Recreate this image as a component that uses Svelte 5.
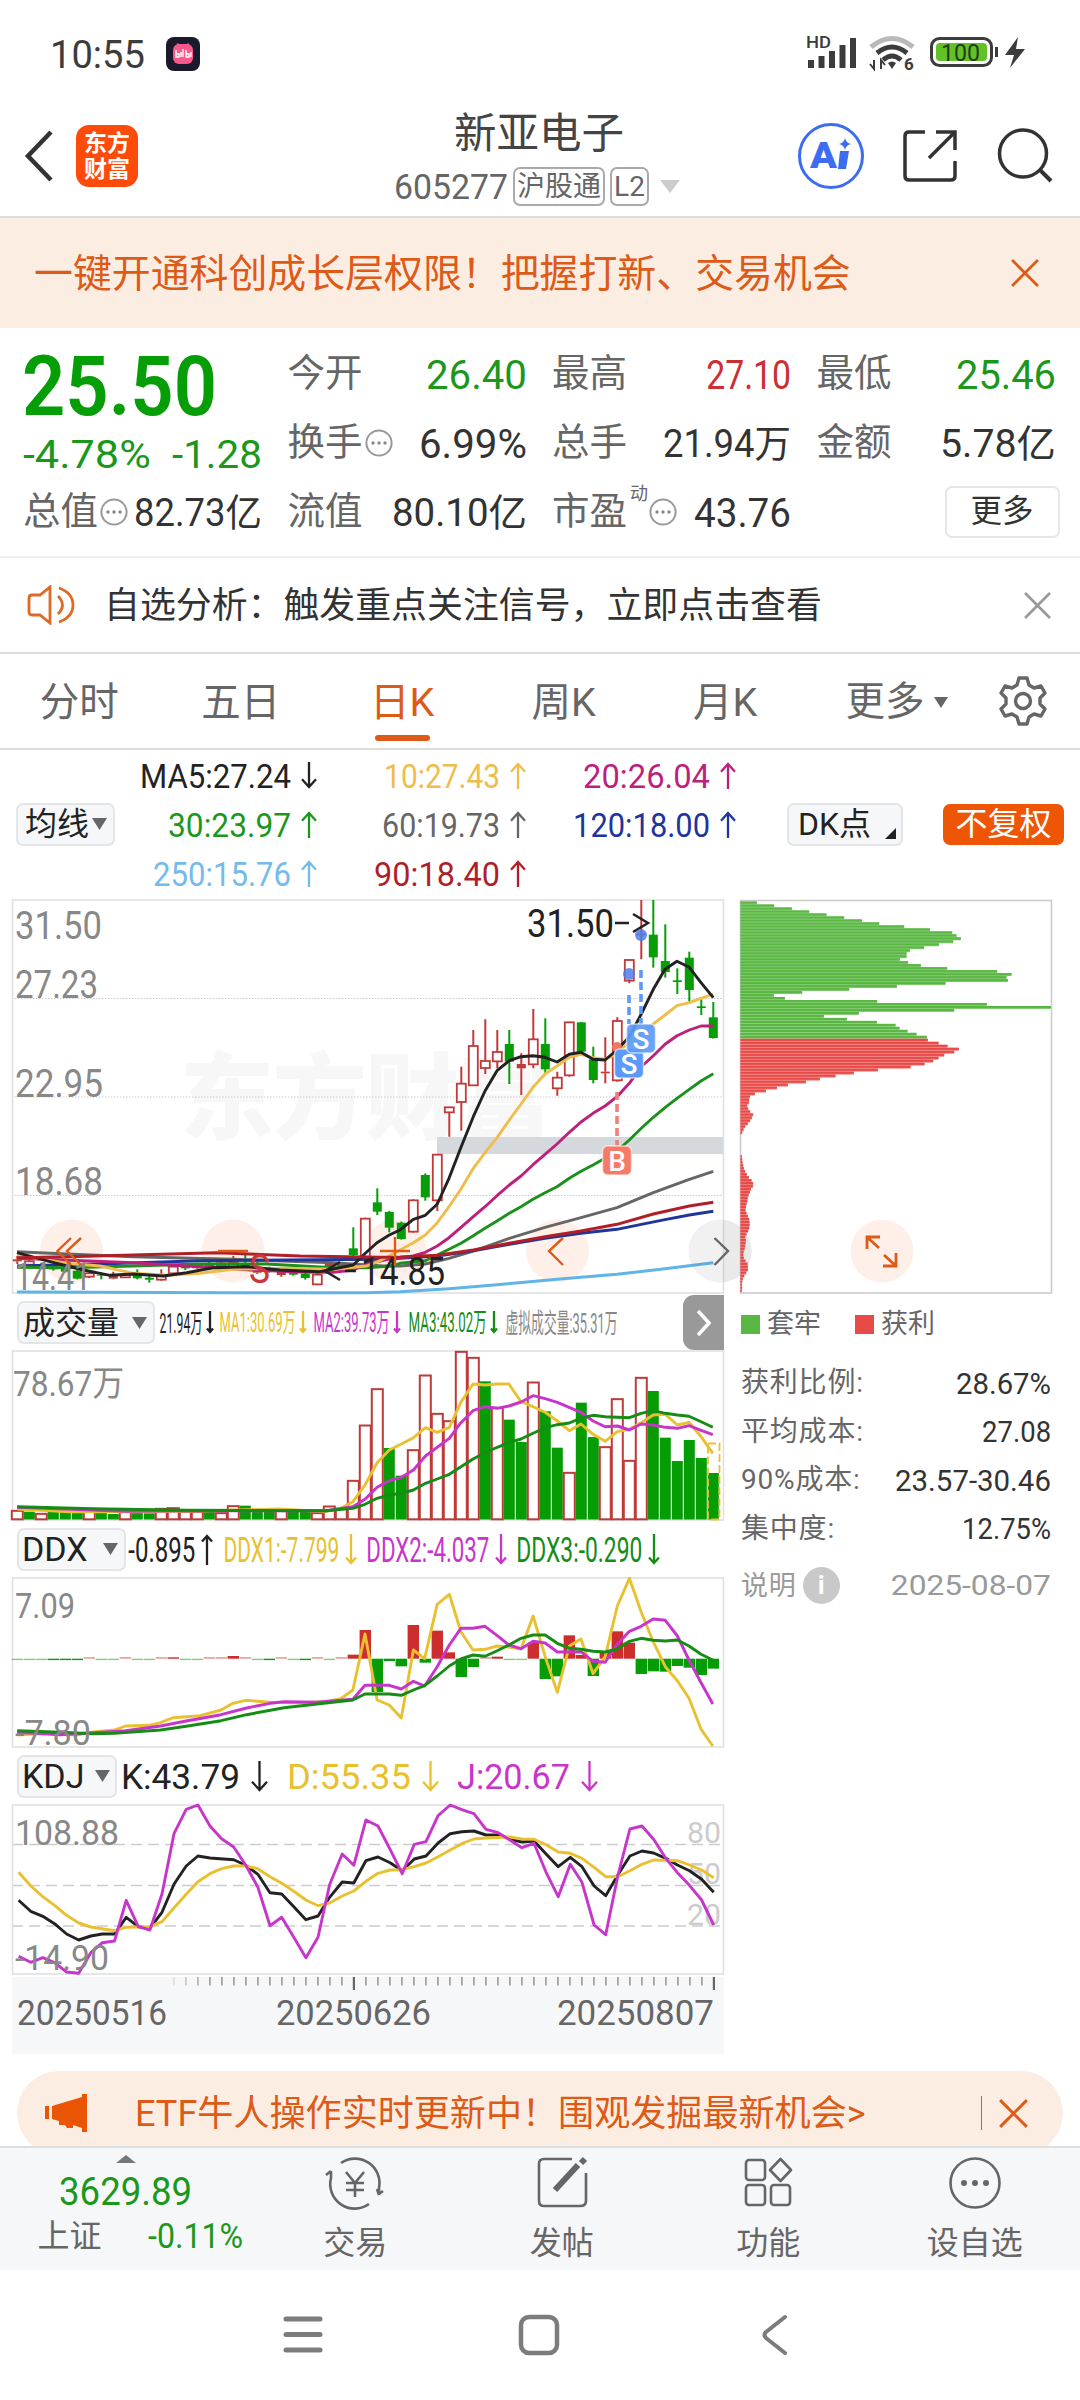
<script>
  // Horizontal position of trading day i on every chart
  const X0 = 17.3, STEP = 12;
  const dx = (i) => X0 + STEP * i;
  const pairs = (s) => s.trim().split(/\s+/).map((p) => p.split(',').map(Number));
  // Points are stored on a fine grid: kx/ky scale them, ox/oy shift them
  const line = (s, kx, ox, oy) =>
    pairs(s).map(([x, y]) => `${(x * kx + ox).toFixed(1)},${(y / 3 + oy).toFixed(1)}`).join(' ');
  const k = 730 / 1568;
  const price = (head, tail) => line(head, 1 / 3, 0, 890) + ' ' + line(tail, 1 / 3, 380, 890);

  // Squeezes a line of text horizontally to the given width
  const fit = (node, w) => {
    const natural = node.getComputedTextLength();
    if (natural) node.setAttribute('transform', `scale(${(w / natural).toFixed(4)} 1)`);
  };

  // [day, kind, high, bodyTop, bodyBottom, low]; r hollow up, f filled up, g down
  const candles = [
    [0,'f',1098,1108,1114,1122],[1,'r',1105,1114,1124,1127],[2,'g',1118,1122,1134,1138],[3,'g',1122,1127,1138,1142],[4,'g',1125,1131,1145,1148],
    [5,'g',1138,1142,1166,1168],[6,'r',1146,1150,1160,1164],[7,'g',1148,1154,1157,1168],[8,'f',1145,1154,1166,1168],[9,'r',1142,1154,1162,1164],
    [10,'g',1138,1152,1165,1168],[11,'g',1155,1163,1169,1178],[12,'r',1138,1158,1169,1172],[13,'r',1124,1130,1150,1154],[14,'g',1124,1129,1135,1140],
    [15,'r',1118,1124,1132,1136],[16,'g',1115,1122,1130,1133],[17,'r',1112,1120,1128,1132],[18,'r',1098,1118,1130,1133],[19,'g',1095,1120,1130,1134],
    [20,'f',1115,1130,1148,1152],[21,'g',1130,1136,1144,1148],[22,'f',1138,1143,1155,1160],[23,'g',1143,1149,1154,1157],[24,'g',1148,1151,1164,1169],
    [25,'r',1150,1154,1183,1186],[26,'f',1115,1118,1146,1148],[27,'f',1118,1122,1130,1132],[28,'g',1012,1075,1095,1100],[29,'r',983,986,1100,1102],
    [30,'g',895,937,965,975],[31,'g',963,966,1013,1027],[32,'g',995,998,1047,1049],[33,'r',928,931,1025,1028],[34,'g',850,855,922,932],
    [35,'r',792,794,931,963],[36,'r',650,652,667,740],[37,'r',530,581,636,722],[38,'r',420,468,586,588],[39,'r',388,513,534,552],
    [40,'r',420,486,514,535],[41,'g',420,462,515,582],[42,'f',490,522,535,615],[43,'r',357,448,523,535],[44,'g',385,462,538,550],
    [45,'r',545,563,595,617],[46,'r',395,397,556,560],[47,'g',396,397,485,486],[48,'g',470,508,570,580],[49,'f',442,545,550,580],
    [50,'r',382,393,571,575],[51,'r',208,210,272,280],[52,'f',30,131,136,208],[53,'g',30,134,202,233],[54,'g',103,213,246,263],
    [55,'g',235,271,276,312],[56,'g',185,203,300,340],[57,'g',328,349,354,375],[58,'g',336,382,444,446]
  ].map(([i, t, h, a, b, l]) => ({ x: dx(i), t, h: h / 3 + 890, a: a / 3 + 890, b: b / 3 + 890, l: l / 3 + 890 }));

  const averages = [
    ['#5fb4e8', price('51,1206 700,1208 1100,1208', '60,1205 207,1196 351,1184 531,1168 711,1153 855,1136 1000,1118')],
    ['#666', price('51,1085 200,1092 400,1100 700,1108 1000,1118 1150,1128', '60,1128 136,1122 207,1105 280,1083 388,1045 495,1012 603,983 711,953 820,908 928,868 1000,844')],
    ['#20349e', price('51,1128 300,1122 600,1112 1140,1108', '60,1105 172,1098 280,1082 388,1063 495,1045 603,1030 711,1018 784,1003 855,989 928,975 1000,964')],
    ['#1b901b', price('51,1132 200,1133 400,1128 600,1122 800,1122 1000,1133 1100,1133 1180,1127', '60,1120 136,1112 172,1095 207,1078 243,1060 280,1037 315,1015 351,993 388,970 423,950 459,928 495,908 531,890 568,865 603,844 639,825 675,805 711,783 748,750 784,715 820,682 855,653 891,625 928,598 963,573 1000,551')],
    ['#bd1f7d', price('51,1105 400,1118 600,1130 750,1140 900,1146 1000,1147 1060,1140 1100,1122 1180,1104', '60,1103 100,1098 136,1087 172,1068 207,1043 243,1012 280,980 315,950 351,917 388,885 423,858 459,824 495,793 531,762 568,727 603,696 639,670 675,648 711,620 748,580 784,530 820,497 855,463 891,437 928,420 963,408 1000,408')],
    ['#f0bd4c', price('51,1095 200,1120 300,1128 400,1150 500,1156 600,1150 700,1138 850,1135 1000,1138 1100,1128', '0,1112 60,1080 100,1058 136,1035 172,998 207,950 243,897 280,835 315,788 351,743 388,690 423,642 459,592 495,552 531,528 568,502 603,493 639,503 675,508 711,492 748,455 784,430 820,402 855,375 891,347 928,338 963,325 1000,312')],
    ['#222', price('51,1088 150,1115 250,1140 330,1156 400,1152 490,1158 560,1148 640,1133 740,1130 840,1140 960,1145 1060,1125 1096,1090 1131,1058 1168,1035', '60,1020 100,988 136,976 172,942 207,865 243,772 280,680 315,603 351,542 388,512 423,500 459,497 495,502 531,516 568,493 603,487 639,508 675,510 711,480 748,440 784,372 820,298 855,238 891,214 928,232 963,278 1000,323')],
    ['#b01f28', price('51,1103 200,1100 400,1095 650,1088 900,1098 1140,1102', '60,1101 172,1096 280,1080 388,1060 495,1040 603,1023 711,1003 820,972 928,948 1000,937')]
  ];

  const volumes = 'r661 g665 r670 g666 g666 g666 r664 g666 g672 r664 g666 g670 r655 r653 r664 r664 g663 r668 r647 g647 g660 g660 r661 g664 g664 r668 r648 r655 r571 r405 r296 g474 g557 r479 r255 r370 r392 r184 r202 g274 r352 g389 g456 r276 g364 g473 r547 g338 g441 r470 r326 r511 r262 g303 g443 g513 g450 g504 g549'
    .split(' ').map((v, i) => ({ x: dx(i), up: v[0] === 'r', y: +v.slice(1) / 3 + 1290 }));
  const volLines = [
    ['#e9c130', line('37,657 150,665 300,665 450,662 600,657 700,665 732,655 758,635 784,585 810,518 836,480 862,462 888,443 914,413 939,427 965,412 990,337 1016,282 1042,285 1068,282 1093,282 1119,335 1145,350 1171,367 1197,393 1223,422 1248,402 1274,433 1300,454 1326,425 1352,418 1377,398 1403,375 1429,373 1455,405 1480,397 1506,440 1531,490', k, 0, 1290)],
    ['#c735cb', line('37,652 270,664 400,662 700,662 758,650 784,628 810,592 836,572 862,562 888,540 914,498 965,445 990,398 1016,362 1042,350 1068,355 1093,348 1119,336 1145,317 1171,326 1197,337 1248,367 1274,393 1300,410 1326,408 1352,420 1377,402 1403,405 1429,412 1455,415 1480,407 1506,421 1531,434', k, 0, 1290)],
    ['#158c15', line('37,650 200,656 400,661 700,662 758,655 784,643 810,625 836,615 862,610 888,600 914,580 939,567 965,553 1016,507 1042,488 1068,472 1093,458 1119,447 1145,430 1171,413 1197,404 1223,399 1248,384 1274,376 1300,380 1352,383 1377,370 1403,362 1429,370 1455,375 1480,379 1506,395 1531,412', k, 0, 1290)]
  ];

  const ddx = 'g0 g0 g0 g299 g299 g299 r0 g0 g0 r0 g0 g0 r0 r292 g0 g0 r0 r0 r288 r0 g0 g299 r0 g0 g299 r0 g0 r0 r284 r210 g396 g303 g319 r195 g308 r212 r277 g351 g321 r0 r290 g0 g0 r248 g357 g349 r226 r285 g348 r275 r214 r248 g342 g334 g335 g318 g323 g345 g326'
    .split(' ').map((v, i) => {
      const up = v[0] === 'r', e = +v.slice(1), thin = e === 0;
      const y0 = 1658.7, y1 = thin ? (up ? y0 - 1.5 : y0 + 1.2) : e / 3 + 1560;
      return { x: dx(i), up, thin, y: Math.min(y0, y1), h: Math.max(1.4, Math.abs(y1 - y0)) };
    });
  const ddxLines = [
    ['#e9c130', line('37,525 100,520 165,525 200,516 245,510 270,498 320,496 345,488 372,473 430,467 475,450 500,430 528,421 580,427 640,428 700,425 732,416 758,390 784,222 810,420 836,435 862,474 888,270 912,296 939,133 965,103 990,215 1016,270 1042,268 1068,258 1093,261 1119,267 1145,168 1171,290 1197,397 1223,258 1248,237 1274,341 1300,290 1326,138 1352,55 1377,155 1403,245 1429,320 1455,362 1480,415 1506,508 1531,558', k, 0, 1560)],
    ['#c735cb', line('37,517 130,524 200,518 270,512 345,498 400,483 475,464 530,444 580,430 610,425 680,427 758,418 784,376 836,376 862,387 888,364 912,378 939,320 965,255 990,205 1016,205 1042,199 1068,227 1093,255 1119,266 1145,244 1171,249 1197,276 1248,275 1274,304 1300,307 1326,253 1352,214 1377,199 1403,177 1429,181 1455,228 1480,300 1506,368 1531,432', k, 0, 1560)],
    ['#158c15', line('37,512 130,517 200,521 245,520 345,510 400,499 475,482 530,464 610,443 700,429 758,420 784,402 836,402 862,406 888,390 912,377 939,348 965,318 990,297 1016,285 1042,289 1068,272 1093,255 1119,235 1145,225 1171,225 1197,250 1223,265 1248,268 1274,274 1300,276 1326,267 1352,244 1377,235 1403,241 1429,243 1455,240 1480,258 1506,283 1531,300', k, 0, 1560)]
  ];

  const kdjLines = [
    ['#222', line('40,451 66,484 92,499 117,521 143,552 169,570 195,558 220,552 246,552 271,502 297,530 322,534 348,487 374,402 400,348 425,318 451,324 502,329 528,346 554,373 580,428 605,432 631,470 657,509 683,498 708,442 735,396 760,399 786,332 812,321 838,338 864,362 890,327 915,318 941,279 967,251 992,245 1018,243 1044,255 1075,255 1095,267 1121,276 1147,273 1173,312 1199,350 1225,322 1250,350 1276,408 1301,437 1327,375 1353,318 1379,303 1404,309 1430,325 1455,345 1481,362 1507,388 1533,427', k, 0, 1750)],
    ['#e9c130', line('40,367 66,407 92,440 117,466 143,496 169,519 195,531 246,542 271,532 322,530 348,515 374,473 400,433 425,395 451,371 476,356 502,348 528,348 554,356 580,380 605,400 631,424 657,450 683,467 708,459 735,438 760,423 786,394 812,370 838,360 864,359 890,350 915,339 941,320 967,300 992,281 1018,267 1044,264 1095,261 1121,267 1147,268 1173,284 1199,306 1225,310 1250,325 1276,352 1301,380 1327,380 1353,362 1379,343 1404,330 1455,332 1481,345 1507,360 1533,383', k, 0, 1750)],
    ['#c735cb', line('40,619 66,637 92,623 117,638 143,666 169,670 195,608 220,578 246,573 271,451 297,530 322,540 348,432 374,250 400,178 425,165 451,228 476,266 502,291 528,346 554,412 580,527 605,502 631,562 657,623 683,562 708,404 735,312 760,346 786,210 812,228 838,298 864,371 890,283 915,275 941,197 967,165 992,179 1018,191 1044,238 1070,248 1095,270 1121,293 1147,280 1173,367 1199,440 1225,343 1250,397 1276,525 1301,554 1327,378 1353,237 1379,228 1404,268 1430,325 1455,368 1481,406 1507,450 1533,525', k, 0, 1750)]
  ];
  const ticks = Array.from({ length: 46 }, (_, n) => n + 13);

  // Cost distribution, one width per price level, top to bottom
  const chips = [111,163,216,268,320,373,426,478,553,630,697,710,723,700,657,613,570,560,560,540,565,603,682,832,875,860,864,677,531,388,247,162,195,472,801,993,703,417,312,381,471,527,539,563,590,621,
    624,656,683,717,703,673,656,640,614,572,474,402,347,300,258,204,171,138,105,90,88,87,82,85,91,100,96,91,84,76,71,67,62,62,62,62,62,62,62,66,67,68,70,72,76,81,87,95,100,99,93,90,86,83,82,80,78,77,80,84,88,89,89,88,85,80,76,78,77,76,74,71,70,72,77,83,84,84,79,73,69,67,66,67,66]
    .map((v, i) => ({ y: 901.5 + i * 2.985, w: (v - 62) / 3, up: i >= 46 }));

  const tabs = ['分时', '五日', '日K', '周K', '月K'];
  const mas = [
    ['MA5:27.24', 150, '#222', 0], ['10:27.43', 115, '#f0bd4c', 1], ['20:26.04', 126, '#bd1f7d', 1],
    ['30:23.97', 122, '#1b981b', 1], ['60:19.73', 117, '#666', 1], ['120:18.00', 136, '#20349e', 1],
    ['250:15.76', 137, '#74bbec', 1], ['90:18.40', 125, '#b01f28', 1]
  ];
  const volLegend = [['21.94万', 42, '#222', 5], ['MA1:30.69万', 75, '#e9c130', 6], ['MA2:39.73万', 75, '#c735cb', 7], ['MA3:43.02万', 77, '#158c15', 8]];
  const ddxLegend = [['-0.895', 66, '#222', 1, 3], ['DDX1:-7.799', 115, '#e9c130', 0, 11], ['DDX2:-4.037', 122, '#c735cb', 0, 10], ['DDX3:-0.290', 125, '#158c15', 0, 10]];
  const kdjLegend = [['K:43.79', 118, '#222', 5], ['D:55.35', 123, '#e9c130', 20], ['J:20.67', 112, '#c735cb', 19]];
  const stats = [['获利比例:', '28.67%', 94], ['平均成本:', '27.08', 68], ['90%成本:', '23.57-30.46', 155], ['集中度:', '12.75%', 88]];
</script>

{#snippet num(s, w, size, fill)}
  <svg class="num" width={w} height={size} {fill}><text x="-1" y={size * 0.87} font-size={size} use:fit={w + 1}>{s}</text></svg>
{/snippet}

{#snippet label(s, x, y, w, size, fill)}
  <text {x} {y} font-size={size} textLength={w} lengthAdjust="spacingAndGlyphs" {fill}>{s}</text>
{/snippet}

{#snippet arrow(up, color, w, h)}
  <svg class="num" width={w} height={h} fill="none" stroke={color} stroke-width="2.3">
    {#if up}<path d="M{w / 2} {h}V2M1 {w * 0.55 + 1}L{w / 2} 2L{w - 1} {w * 0.55 + 1}" />
    {:else}<path d="M{w / 2} 0V{h - 2}M1 {h - 1 - w * 0.55}L{w / 2} {h - 2}L{w - 1} {h - 1 - w * 0.55}" />{/if}
  </svg>
{/snippet}

{#snippet more()}
  <svg class="more" width="28" height="28" viewBox="0 0 28 28"><circle cx="14" cy="14" r="12.600" fill="none" stroke="#999" stroke-width="2" /><g fill="#888"><circle cx="8" cy="14" r="1.700" /><circle cx="14" cy="14" r="1.700" /><circle cx="20" cy="14" r="1.700" /></g></svg>
{/snippet}

{#snippet cross(size, color)}
  <svg width={size} height={size} viewBox="0 0 26 26" fill="none" stroke={color} stroke-width="2.600"><path d="M1 1L25 25M25 1L1 25" /></svg>
{/snippet}

{#snippet caret()}
  <svg class="caret" width="15" height="12"><path d="M0 0H15L7.500 12Z" fill="#666" /></svg>
{/snippet}

{#snippet frame(y, h)}
  <rect x="12.500" {y} width="711" height={h} fill="none" stroke="#e0e0e0" stroke-width="1.600" />
{/snippet}

{#snippet curves(list)}
  {#each list as [c, pts]}<polyline points={pts} fill="none" stroke={c} stroke-width="2.900" stroke-linejoin="round" />{/each}
{/snippet}

<div class="screen">
  <div class="status">
    {@render num('10:55', 94, 38, '#3c3c3c')}
    <svg class="bili" width="34" height="34" viewBox="0 0 34 34"><rect width="34" height="34" rx="8" fill="#191a2c" /><rect x="7" y="7" width="20" height="20" rx="6" fill="#f9588c" /><path d="M11 7l2 1M23 7l-2 1" stroke="#f9588c" stroke-width="2" /><path d="M10 13v7h3v-3h-3M15 15v5M17 12v8M20 13v7h3v-3h-3M25 15v5" fill="none" stroke="#fff" stroke-width="1.400" /></svg>
    <svg class="radio" width="220" height="40" viewBox="806 36 220 40">
      <text x="806" y="50" font-size="16" font-weight="500" textLength="25" lengthAdjust="spacingAndGlyphs" fill="#3c3c3c">HD</text>
      <path d="M811 70V62M821.500 70V58M832 70V53M842.500 70V47M853 70V40" stroke="#3c3c3c" stroke-width="6" />
      <g fill="none" stroke-width="5"><path d="M871 49Q892 32 913 49" stroke="#b9b9b9" /><path d="M877 55Q892 43 907 55M883 62Q892 54 901 62" stroke="#3c3c3c" /></g>
      <path d="M888 65Q892 62 896 65L892 71Z" fill="#3c3c3c" />
      <path d="M874 62V71L870 66M881 71V62L885 67" fill="none" stroke="#3c3c3c" stroke-width="2" />
      <text x="904" y="72" font-size="17" font-weight="700" fill="#3c3c3c">6</text>
      <rect x="931.500" y="40.500" width="60" height="27" rx="8" fill="none" stroke="#3c3c3c" stroke-width="3" />
      <rect x="936" y="45" width="51" height="18" rx="4" fill="#62c125" />
      <path d="M996.500 49V59" stroke="#3c3c3c" stroke-width="3" />
      <text x="941" y="62.500" font-size="23" textLength="39" lengthAdjust="spacingAndGlyphs" fill="#263b1c">100</text>
      <path d="M1018 39L1005 57H1014L1010 70L1025 51H1016Z" fill="#3c3c3c" />
    </svg>
  </div>

  <header>
    <svg width="30" height="52" viewBox="0 0 30 52" fill="none" stroke="#333" stroke-width="4.500"><path d="M27 2L4 26L27 50" /></svg>
    <div class="logo"><span>东方</span><span>财富</span></div>
    <div class="title">
      <h1>新亚电子</h1>
      <div class="code">{@render num('605277', 113, 35, '#666')}<span class="tag wide">沪股通</span><span class="tag">L2</span><svg width="20" height="13"><path d="M0 0H20L10 13Z" fill="#ccc" /></svg></div>
    </div>
    <svg class="acts" width="260" height="70" viewBox="796 121 260 70" fill="none">
      <circle cx="831" cy="156" r="31.500" stroke="#3d6cf0" stroke-width="3" />
      <text x="810" y="168" font-size="37" font-weight="900" fill="#3d6cf0" textLength="27" lengthAdjust="spacingAndGlyphs">A</text>
      <path d="M840 151H849L846 169H838Z" fill="#3d6cf0" /><path d="M845 138Q846 143 851 144Q846 145 845 150Q844 145 839 144Q844 143 845 138Z" fill="#3d6cf0" />
      <path d="M925 132H909Q905 132 905 136V176Q905 180 909 180H951Q955 180 955 176V161M936 132H955V150M955 132L929 158" stroke="#333" stroke-width="3.500" />
      <circle cx="1023" cy="153.500" r="23.500" stroke="#333" stroke-width="3.500" /><path d="M1040 170L1051 181" stroke="#333" stroke-width="4" />
    </svg>
  </header>

  <div class="promo"><span>一键开通科创成长层权限！把握打新、交易机会</span>{@render cross(28, '#dd5a17')}</div>

  <section class="quote">
    <div class="last">
      <svg class="num big" width="194" height="84" fill="#069e06"><text x="-2" y="72" font-size="84" textLength="195" lengthAdjust="spacingAndGlyphs">25.50</text></svg>
      <div class="chg">{@render num('-4.78%', 127, 39, '#1b981b')}{@render num('-1.28', 89, 39, '#1b981b')}</div>
    </div>
    <div class="cell"><b>今开</b>{@render num('26.40', 100, 40, '#1b981b')}</div>
    <div class="cell"><b>最高</b>{@render num('27.10', 84, 40, '#cc2e32')}</div>
    <div class="cell"><b>最低</b>{@render num('25.46', 99, 40, '#1b981b')}</div>
    <div class="cell"><b>换手{@render more()}</b>{@render num('6.99%', 107, 40, '#333')}</div>
    <div class="cell"><b>总手</b>{@render num('21.94万', 127, 38, '#333')}</div>
    <div class="cell"><b>金额</b>{@render num('5.78亿', 115, 38, '#333')}</div>
    <div class="cell"><b>总值{@render more()}</b>{@render num('82.73亿', 127, 38, '#333')}</div>
    <div class="cell"><b>流值</b>{@render num('80.10亿', 134, 38, '#333')}</div>
    <div class="cell"><b>市盈<sup>动</sup>{@render more()}</b>{@render num('43.76', 96, 40, '#333')}</div>
    <div class="cell end"><button class="morebtn">更多</button></div>
  </section>

  <div class="notice">
    <svg width="48" height="40" viewBox="0 0 48 40" fill="none" stroke="#dd6a25" stroke-width="2.800"><path d="M23 2V38L13 30H5Q2 30 2 27V13Q2 10 5 10H13ZM31 11Q40 20 31 29M32 3Q46 8 46 20Q46 32 32 37" /></svg>
    <span>自选分析：触发重点关注信号，立即点击查看</span>{@render cross(27, '#999')}
  </div>

  <nav class="tabs">
    {#each tabs as t}<div class="tab" class:on={t === '日K'}>{t}</div>{/each}
    <div class="tabmore">更多<svg width="14" height="11"><path d="M0 0H14L7 11Z" fill="#666" /></svg></div>
    <svg class="gear" width="50" height="50" viewBox="0 0 50 50" fill="none" stroke="#666" stroke-width="3.400" stroke-linejoin="round"><path d="M21 2H29L31 9L36 12L43 10L47 17L42 22V28L47 33L43 40L36 38L31 41L29 48H21L19 41L14 38L7 40L3 33L8 28V22L3 17L7 10L14 12L19 9Z" /><circle cx="25" cy="25" r="7.500" /></svg>
  </nav>

  <div class="mabar">
    <button class="pill ma">均线{@render caret()}</button>
    <div class="mas">
      {#each mas as [s, w, c, up]}<div class="mv">{@render num(s, w, 33, c)}{@render arrow(up, c, 16, 27)}</div>{/each}
    </div>
    <button class="pill dk">DK点<svg width="11" height="11"><path d="M11 0V11H0Z" fill="#222" /></svg></button>
    <button class="pill fq">不复权</button>
  </div>

  <div class="charts">
    <div class="left">
      <svg class="plot" width="724" height="402" viewBox="0 895 724 402">
        <text x="180" y="1132" font-size="94" font-weight="900" textLength="372" fill="#f7f7f7">东方财富</text>
        {#each [998.5, 1097, 1195.5] as y}<path d="M12 {y}H723" stroke="#ccc" stroke-width="1" stroke-dasharray="1.500 1.500" />{/each}
        {@render frame(900, 393)}
        <rect x="437" y="1137" width="286" height="17" fill="#d5d8dd" />
        {@render label('31.50', 15, 939, 87, 38, '#888')}
        {@render label('27.23', 15, 998, 83, 38, '#888')}
        {@render label('22.95', 15, 1097, 88, 38, '#888')}
        {@render label('18.68', 15, 1195, 88, 38, '#888')}
        <g fill="#fef0e8"><circle cx="71.500" cy="1251" r="31.500" /><circle cx="233" cy="1251" r="31.500" /><circle cx="395" cy="1251" r="31.500" /><circle cx="557.500" cy="1251" r="31.500" /></g>
        {#each candles as c}
          {#if c.t === 'g'}
            <path d="M{c.x} {c.h}V{c.l}" stroke="#079d07" stroke-width="2" /><rect x={c.x - 4.5} y={c.a} width="9" height={c.b - c.a} fill="#079d07" />
          {:else}
            <path d="M{c.x} {c.h}V{c.a}M{c.x} {c.b}V{c.l}" stroke="#c03a3a" stroke-width="2" /><rect x={c.x - 4.5} y={c.a} width="9" height={c.b - c.a} fill={c.t === 'f' ? '#c03a3a' : '#fff'} stroke="#c03a3a" stroke-width={c.t === 'f' ? 0 : 1.8} />
          {/if}
        {/each}
        {@render curves(averages)}
        {@render label('14.41', 15, 1290, 76, 38, '#888')}
        {@render label('S', 249, 1283, 21, 40, '#cc3636')}
        <path d="M340 1262L325 1271L340 1280M345 1271H356" fill="none" stroke="#222" stroke-width="2.500" />
        {@render label('14.85', 361, 1285, 84, 38, '#222')}
        {@render label('31.50', 527, 937, 87, 38, '#222')}
        <path d="M615 923H629M633 914L648 923L633 932" fill="none" stroke="#222" stroke-width="2.500" />
        <g fill="none" stroke="#dd5a17" stroke-width="2.400"><path d="M71 1238L57.500 1251L71 1265M81 1238L67 1251L81 1265M218 1251H248M380 1251H410M395 1237V1266M563 1238L549 1251L563 1265" /></g>
        <g fill="#4e7fe8" fill-opacity=".85"><circle cx="629" cy="974" r="6" /><circle cx="641" cy="935" r="6" /></g><circle cx="617" cy="1047" r="5" fill="#f07868" />
        <g fill="none" stroke-width="3.600" stroke-dasharray="8 4"><path d="M629 995V1024M641 970V1024" stroke="#5e9af5" /><path d="M617 1092V1145" stroke="#f08078" /></g>
        <g stroke="#fff" stroke-opacity=".6" stroke-width="1.500"><rect x="614.500" y="1049" width="29" height="29" rx="5" fill="#5b9af9" /><rect x="626.500" y="1024" width="29" height="29" rx="5" fill="#5b9af9" fill-opacity=".92" /><rect x="602.500" y="1146" width="29" height="29" rx="5" fill="#f77967" /></g>
        <g fill="#fff" font-size="28" font-weight="500" text-anchor="middle"><text x="629" y="1074">S</text><text x="641" y="1048.500">S</text><text x="617" y="1171">B</text></g>
        <circle cx="720" cy="1251" r="31.500" fill="#777" fill-opacity=".1" /><path d="M714.500 1238L728 1251L714.500 1265" fill="none" stroke="#666" stroke-width="2.400" />
      </svg>

      <div class="ind">
        <button class="pill i1">成交量{@render caret()}</button>
        {#each volLegend as [s, w, c, g]}<span class="it" style:margin-left="{g}px">{@render num(s, w, 27, c)}</span><span class="a1">{@render arrow(0, c, 8, 23)}</span>{/each}
        <span class="virt">{@render num('虚拟成交量:35.31万', 111, 27, '#888')}</span>
        <button class="next" aria-label="next"><svg width="14" height="26" fill="none" stroke="#fff" stroke-width="3.600"><path d="M1 1L12 13L1 25" /></svg></button>
      </div>
      <svg class="plot" width="724" height="176" viewBox="0 1348 724 176">
        {@render frame(1351, 169)}
        {@render label('78.67万', 13, 1396, 111, 35, '#888')}
        {#each volumes as v}
          {#if v.up}<rect x={v.x - 5.5} y={v.y + 0.5} width="11" height={1518.8 - v.y} fill="#fff" stroke="#c03a3a" stroke-width="2" />
          {:else}<rect x={v.x - 5.5} y={v.y} width="11" height={1519.5 - v.y} fill="#059c05" />{/if}
        {/each}
        <rect x="708" y="1443.500" width="11.500" height="76" fill="none" stroke="#e9c130" stroke-width="1.800" stroke-dasharray="8 3" />
        {@render curves(volLines)}
      </svg>

      <div class="ind">
        <button class="pill i2">DDX{@render caret()}</button>
        {#each ddxLegend as [s, w, c, up, g]}<span class="it" style:margin-left="{g}px">{@render num(s, w, 35, c)}</span><span class="a2">{@render arrow(up, c, 12, 31)}</span>{/each}
      </div>
      <svg class="plot" width="724" height="177" viewBox="0 1574 724 177">
        {@render frame(1578, 169)}
        {@render label('7.09', 15, 1617.5, 60, 35, '#888')}
        {#each ddx as b}<rect x={b.x - 5.7} y={b.y} width="11.400" height={b.h} fill={b.up ? '#cc2e2e' : '#059c05'} opacity={b.thin ? 0.5 : 1} />{/each}
        {@render curves(ddxLines)}
        {@render label('-7.80', 15, 1745, 76, 35, '#888')}
      </svg>

      <div class="ind">
        <button class="pill i3">KDJ{@render caret()}</button>
        {#each kdjLegend as [s, w, c, g]}<span class="it" style:margin-left="{g}px">{@render num(s, w, 35, c)}</span><span class="a3">{@render arrow(0, c, 17, 31)}</span>{/each}
      </div>
      <svg class="plot" width="724" height="254" viewBox="0 1801 724 254">
        {#each [1844.5, 1885.5, 1926] as y}<path d="M12 {y}H723" stroke="#ccc" stroke-width="1.400" stroke-dasharray="11 6" />{/each}
        {@render frame(1805, 169)}
        {@render label('108.88', 15, 1844.5, 104, 35, '#888')}
        {@render label('80', 687, 1843, 34, 30, '#ccc')}
        {@render label('50', 687, 1884, 34, 30, '#ccc')}
        {@render label('20', 687, 1925, 34, 30, '#ccc')}
        {@render curves(kdjLines)}
        {@render label('-14.90', 15, 1969.5, 94, 35, '#888')}
        <rect x="12" y="1977" width="712" height="77" fill="#f6f7f9" />
        {#each ticks as i}<path d="M{dx(i) + 0.6} 1977V{i === 28 || i === 58 ? 1990 : 1985.5}" stroke={i === 28 || i === 58 ? '#666' : '#999'} stroke-width={i === 28 || i === 58 ? 2.2 : 1.6} opacity={i < 16 ? (i - 12) * 0.25 : 1} />{/each}
        {@render label('20250516', 17, 2025, 150, 35, '#666')}
        {@render label('20250626', 276, 2025, 155, 35, '#666')}
        {@render label('20250807', 557, 2025, 157, 35, '#666')}
      </svg>
    </div>

    <aside>
      <svg class="plot" width="356" height="402" viewBox="724 895 356 402">
        <rect x="740.500" y="900.500" width="311" height="392.500" fill="none" stroke="#ccc" stroke-width="1.600" />
        {#each chips as c}<rect x="740.500" y={c.y} width={c.w} height="2.985" fill={c.up ? '#f07f7c' : '#85cc74'} /><rect x="740.500" y={c.y} width={c.w} height="2.100" fill={c.up ? '#e84a48' : '#5ab744'} />{/each}
        <circle cx="882" cy="1251" r="31.500" fill="#fef0e8" />
        <path d="M867 1249V1237H880M867 1237L879 1248M896 1253V1266H883M896 1266L884 1255" fill="none" stroke="#dd5a17" stroke-width="2.800" />
        <path d="M724 1219.700A31.500 31.500 0 0 1 724 1282.300Z" fill="#777" fill-opacity=".05" />
      </svg>
      <div class="key"><i class="g"></i><span>套牢</span><i class="r"></i><span>获利</span></div>
      {#each stats as [n, v, w]}<div class="stat"><span>{n}</span>{@render num(v, w, 29.5, '#333')}</div>{/each}
      <div class="stat note"><span>说明</span><em>i</em>{@render num('2025-08-07', 159, 28, '#999')}</div>
    </aside>
  </div>

  <div class="etfwrap">
    <div class="etf">
      <svg width="42" height="38" viewBox="0 0 42 38" fill="#ea5504"><path d="M0 12H4V25H0ZM7 12L37 3V0H42V38H37V34L28 31V34H22L20 31H14V27L7 25Z" /></svg>
      <span>ETF牛人操作实时更新中！围观发掘最新机会&gt;</span>
      <i></i>{@render cross(29, '#dd5a17')}
    </div>
  </div>

  <footer>
    <div class="index">
      <svg width="20" height="8"><path d="M0 8L10 0L20 8Z" fill="#777" /></svg>
      {@render num('3629.89', 132, 38, '#1b981b')}
      <div class="sz"><span>上证</span>{@render num('-0.11%', 94, 35, '#1b981b')}</div>
    </div>
    <div class="act"><svg width="60" height="56" viewBox="-30 -28 60 56" fill="none" stroke="#666" stroke-width="2.600"><path d="M-14 -20A24.500 24.500 0 0 1 24 5V11M24 11L28 8M24 12L22 6M14 21A24.500 24.500 0 0 1 -24 -5V-12M-24 -12L-29 -8M-9 -11L0 0L9 -11M-9 0H9M-9 7H9M0 0V14" /></svg><span>交易</span></div>
    <div class="act"><svg width="60" height="56" viewBox="-30 -28 60 56" fill="none" stroke="#666" stroke-width="2.600"><path d="M10 -24H-18Q-23 -24 -23 -19V18Q-23 23 -18 23H18Q24 23 24 18V-10" /><path d="M-7 7L16 -18" stroke-width="6" /><path d="M19 -20L23 -24" stroke-width="6" /></svg><span>发帖</span></div>
    <div class="act"><svg width="60" height="56" viewBox="-30 -28 60 56" fill="none" stroke="#666" stroke-width="2.600"><rect x="-22" y="-23" width="19" height="20" rx="3" /><rect x="-22" y="2" width="19" height="20" rx="3" /><rect x="3" y="2" width="19" height="20" rx="3" /><path d="M12.500 -24L23 -13L12.500 -2L2 -13Z" stroke-linejoin="round" /></svg><span>功能</span></div>
    <div class="act"><svg width="60" height="56" viewBox="-30 -28 60 56" fill="none" stroke="#666" stroke-width="2.600"><circle r="24.500" /><g fill="#666" stroke="none"><circle cx="-11" r="3" /><circle r="3" /><circle cx="11" r="3" /></g></svg><span>设自选</span></div>
  </footer>

  <div class="sysnav">
    <svg width="40" height="42" viewBox="0 0 40 42" stroke="#7c7c7c" stroke-width="5" stroke-linecap="round"><path d="M3 5H37M3 20.500H37M3 36H37" /></svg>
    <svg width="42" height="42" viewBox="0 0 42 42" fill="none" stroke="#7c7c7c" stroke-width="4.500"><rect x="3" y="3" width="36" height="36" rx="8" /></svg>
    <svg width="27" height="42" viewBox="0 0 27 42" fill="none" stroke="#7c7c7c" stroke-width="4" stroke-linecap="round" stroke-linejoin="round"><path d="M24 3L5 18Q2 21 5 24L24 39" /></svg>
  </div>
</div>

<style>
  :global(body) { margin: 0; background: #fff; }
  .screen { width: 1080px; height: 2400px; display: flex; flex-direction: column; background: #fff; color: #333; font-family: Roboto, "Noto Sans CJK SC", sans-serif; line-height: 1; overflow: hidden; }
  .screen > * { box-sizing: border-box; flex: none; }
  svg { display: block; flex: none; }
  .num { overflow: visible; }
  button { font: inherit; color: inherit; box-sizing: border-box; padding: 0; border: 0; display: flex; align-items: center; white-space: nowrap; }
  span { white-space: nowrap; }

  .status { height: 110px; display: flex; align-items: center; padding: 0 54px 2px 51px; }
  .bili { margin-left: 21px; }
  .radio { margin-left: auto; }
  header { height: 108px; display: flex; align-items: center; padding: 0 24px 14px; border-bottom: 2px solid #ddd; }
  .logo { width: 62px; height: 62px; margin-left: 22px; border-radius: 13px; background: #ff4b0a; color: #fff; font-size: 23px; font-weight: 700; display: flex; flex-direction: column; align-items: center; justify-content: center; gap: 3px; }
  .title { margin-left: 257px; display: flex; flex-direction: column; align-items: flex-start; gap: 12px; padding-top: 7px; }
  h1 { margin: 0 0 0 59px; font-size: 42.5px; font-weight: 400; color: #444; }
  .code { display: flex; align-items: center; gap: 5px; }
  .code > svg:last-child { margin-left: 6px; }
  .tag { box-sizing: border-box; height: 39px; width: 39px; border: 2px solid #aaa; border-radius: 7px; display: flex; align-items: center; justify-content: center; font-size: 28px; color: #666; }
  .tag.wide { width: 92px; }
  .acts { margin-left: auto; }
  .promo { height: 110px; background: #fcede3; color: #dd5a17; font-size: 38.9px; display: flex; align-items: center; justify-content: space-between; padding: 0 41px 0 34px; }
  .promo span, .notice span, .etf span { padding-top: 3px; }

  .quote { height: 230px; display: grid; grid-template-columns: repeat(4, 238px); grid-template-rows: repeat(3, 69px); column-gap: 26.5px; padding: 11px 0 0 24px; border-bottom: 2px solid #eee; }
  .last { grid-row: span 2; display: flex; flex-direction: column; }
  .big { font-weight: 600; margin-top: 4px; }
  .chg { display: flex; justify-content: space-between; margin-top: 7px; }
  .cell { display: flex; align-items: center; justify-content: space-between; }
  .cell b { font-weight: 400; font-size: 37.500px; color: #666; display: flex; align-items: center; padding-top: 1px; margin-left: -1px; }
  .more { margin-left: 2px; }
  sup { font-size: 18px; align-self: flex-start; line-height: 1; margin: -8px 0 0 3px; width: 17px; }
  .cell.end { justify-content: flex-end; }
  .morebtn { width: 115px; height: 52px; margin-right: -4px; justify-content: center; border: 2px solid #e5e7e8; border-radius: 7px; background: #fff; font-size: 31.500px; }

  .notice { height: 96px; border-bottom: 2px solid #ddd; display: flex; align-items: center; padding: 0 29px 0 27px; font-size: 35.9px; }
  .notice span { margin: 0 auto 0 29px; }
  .tabs { height: 96px; border-bottom: 2px solid #ddd; display: flex; align-items: center; font-size: 39.500px; color: #666; }
  .tab { width: 161.500px; height: 94px; display: flex; align-items: center; justify-content: center; box-sizing: border-box; padding: 3px 3px 0 0; }
  .tab.on { color: #dd5a17; position: relative; }
  .tab.on::after { content: ''; position: absolute; left: 52px; bottom: 7px; width: 55px; height: 6px; border-radius: 3px; background: #dd5a17; }
  .tabmore { margin-left: 38px; display: flex; align-items: center; gap: 9px; padding-top: 2px; }
  .gear { margin-left: 50px; }

  .mabar { height: 145px; display: flex; align-items: center; padding: 3px 16px 0; }
  .pill { border: 2px solid #e3e5e8; border-radius: 7px; background: #f6f7f9; color: #222; font-size: 32px; height: 43px; justify-content: space-between; }
  .ma { width: 99px; padding: 0 6px 0 7px; }
  .mas { display: grid; grid-template-columns: 202px 209px 210px; grid-template-rows: repeat(3, 49px); }
  .mv { display: flex; align-items: center; justify-content: flex-end; gap: 10px; }
  .dk { width: 116px; margin-left: 51px; padding: 0 5px 0 9px; }
  .dk svg { margin-top: 18px; }
  .fq { width: 121px; margin-left: 40px; background: #ee5606; border: 0; color: #fff; justify-content: center; height: 41px; }

  .charts { display: flex; height: 1176px; }
  .left { width: 724px; }
  .plot { overflow: visible; }
  .ind { height: 50px; display: flex; align-items: center; padding-left: 17px; }
  .ind:nth-of-type(1) { height: 51px; }
  .i1 { width: 138px; padding: 0 6px 0 4px; }
  .i2 { width: 109px; padding: 0 6px 0 3px; font-size: 34px; }
  .i3 { width: 100px; padding: 0 5px 0 3px; font-size: 34px; }
  .a1 { margin-left: 4px; }
  .a2 { margin-left: 6px; }
  .a3 { margin-left: 11px; }
  .virt { margin-left: 8px; }
  .next { margin-left: auto; width: 41px; height: 55px; background: #999; border-radius: 11px 0 0 11px; justify-content: center; }

  aside { width: 356px; }
  .key { height: 61px; box-sizing: border-box; display: flex; align-items: center; padding: 0 0 7px 17px; font-size: 27px; color: #666; }
  .key i { width: 19px; height: 19px; margin-right: 7px; }
  .key span { margin-right: 34px; }
  .g { background: #5ab744; }
  .r { background: #e84a48; }
  .stat { height: 48.500px; display: flex; align-items: center; justify-content: space-between; padding: 0 29px 0 17px; font-size: 28px; color: #666; }
  .stat span { letter-spacing: 0.8px; padding-top: 2px; }
  .note { height: 66px; color: #999; font-size: 27px; justify-content: flex-start; }
  .note em { width: 37px; height: 37px; margin: 0 auto 0 6px; border-radius: 50%; background: #c9c9c9; color: #fff; font-style: normal; font-weight: 700; font-size: 26px; display: flex; align-items: center; justify-content: center; }

  .etfwrap { height: 75px; overflow: hidden; padding: 0 17px; }
  .etf { height: 84px; border-radius: 42px; background: #fcede3; display: flex; align-items: center; padding: 0 35px 0 28px; color: #dd5a17; font-size: 36.100px; }
  .etf span { margin: 0 auto 0 48px; }
  .etf i { width: 1px; height: 34px; background: #dd5a17; margin-right: 17px; }
  footer { height: 124px; background: #f6f7f9; border-top: 2px solid #dcdddf; display: flex; }
  .index { width: 252px; display: flex; flex-direction: column; align-items: center; padding-top: 7px; }
  .index > .num { margin-top: 9px; }
  .sz { width: 205px; display: flex; align-items: center; justify-content: space-between; margin: 8px 0 0 28px; font-size: 32px; color: #666; }
  .act { width: 206.500px; display: flex; flex-direction: column; align-items: center; padding-top: 7px; gap: 16px; font-size: 32px; color: #666; }
  .sysnav { height: 130px; display: flex; align-items: center; padding: 0 0 0 283px; }
  .sysnav svg:nth-child(2) { margin-left: 195px; }
  .sysnav svg:nth-child(3) { margin-left: 201px; }
</style>
